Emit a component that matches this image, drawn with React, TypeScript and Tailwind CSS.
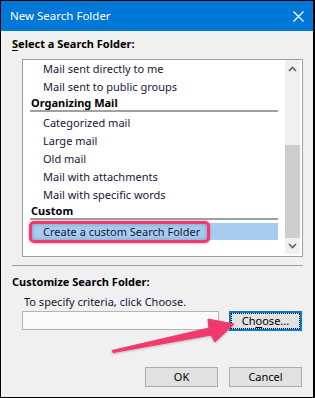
import React from 'react'

const font = { fontFamily: '"Noto Sans", "Open Sans", sans-serif' }

type Row = { label: string; header?: boolean; selected?: boolean }

const rows: Row[] = [
  { label: 'Mail sent directly to me' },
  { label: 'Mail sent to public groups' },
  { label: 'Organizing Mail', header: true },
  { label: 'Categorized mail' },
  { label: 'Large mail' },
  { label: 'Old mail' },
  { label: 'Mail with attachments' },
  { label: 'Mail with specific words' },
  { label: 'Custom', header: true },
  { label: 'Create a custom Search Folder', selected: true },
]

function Chevron({ up }: { up?: boolean }) {
  return (
    <svg width="9" height="6" viewBox="0 0 9 6">
      <polyline
        points={up ? '1,5 4.5,1.5 8,5' : '1,1 4.5,4.5 8,1'}
        fill="none"
        stroke="#606060"
        strokeWidth="1.6"
      />
    </svg>
  )
}

function ListRow({ row }: { row: Row }) {
  if (row.header) {
    return (
      <div className="h-[18px] flex flex-col">
        <div className="h-[14px] leading-[14px] pl-[1px] font-bold text-[11px] text-black">{row.label}</div>
        <div className="h-[2px] bg-[#a0a0a0]" />
      </div>
    )
  }
  if (row.selected) {
    return (
      <div className="relative h-[17px] mt-[1px] bg-[#a6cdef] pl-[13px] leading-[17px] text-[11px] text-[#161638]">
        <div className="absolute left-[-1px] top-[-2px] w-[181px] h-[22px] rounded-[5px] border-[3px] border-[#f2386d] shadow-[0_0_3px_rgba(242,56,109,0.6),inset_0_0_4px_rgba(60,90,130,0.45)]" />
        <span className="relative">{row.label}</span>
      </div>
    )
  }
  return <div className="h-[18px] leading-[18px] pl-[13px] text-[11px] text-[#161638]">{row.label}</div>
}

function Button({ children, focused }: { children: React.ReactNode; focused?: boolean }) {
  return (
    <div
      className={`w-[73px] h-[20px] flex items-center justify-center text-[11px] text-black bg-[#e1e1e1] ${
        focused ? 'border-2 border-[#0078d7]' : 'border border-[#adadad]'
      }`}
    >
      {focused ? (
        <div className="w-full h-full flex items-center justify-center border border-dotted border-black">
          {children}
        </div>
      ) : (
        children
      )}
    </div>
  )
}

export default function App() {
  return (
    <div
      style={font}
      className="relative w-[315px] h-[398px] flex flex-col bg-[#f0f0f0] border-t border-l border-r-2 border-b border-black overflow-hidden"
    >
      {/* Title bar */}
      <div className="h-[30px] shrink-0 flex items-center justify-between bg-[#0078d7] pl-[9px] pr-[9px]">
        <span className="text-[11.5px] text-white">New Search Folder</span>
        <svg width="11" height="11" viewBox="0 0 11 11">
          <path d="M0.5 0.5 L10.5 10.5 M10.5 0.5 L0.5 10.5" stroke="#fff" strokeWidth="1.2" />
        </svg>
      </div>

      {/* Select a Search Folder */}
      <div className="mt-[5px] ml-[11px] h-[16px] leading-[16px] font-bold text-[11px] text-black">
        <span className="underline underline-offset-2">S</span>elect a Search Folder:
      </div>

      <div className="mt-[7px] ml-[21px] w-[281px] h-[198px] flex bg-white border border-[#a0a0a0]">
        <div className="flex-1 flex flex-col px-[7px]">
          {rows.map((r) => (
            <ListRow key={r.label} row={r} />
          ))}
        </div>
        <div className="w-[15px] mr-[2px] mb-[2px] flex flex-col bg-[#f0f0f0]">
          <div className="h-[17px] flex items-center justify-center">
            <Chevron up />
          </div>
          <div className="h-[68px]" />
          <div className="h-[93px] bg-[#cdcdcd]" />
          <div className="flex-1 flex items-center justify-center">
            <Chevron />
          </div>
        </div>
      </div>

      {/* Divider */}
      <div className="mt-[8px] ml-[11px] w-[291px] h-[1px] bg-[#a0a0a0]" />

      {/* Customize */}
      <div className="mt-[8px] ml-[11px] h-[16px] leading-[16px] font-bold text-[11px] text-black">
        Customize Search Folder:
      </div>
      <div className="mt-[4px] ml-[23px] h-[16px] leading-[16px] text-[11px] text-[#161638]">
        To specify criteria, click Choose.
      </div>
      <div className="mt-[1px] ml-[21px] flex items-start gap-[10px]">
        <div className="w-[197px] h-[19px] bg-[#fafafa] border border-[#b4b4b4]" />
        <Button focused>
          <span>
            Ch<span className="underline underline-offset-2">o</span>ose...
          </span>
        </Button>
      </div>

      {/* Bottom buttons */}
      <div className="mt-[36px] ml-[144px] flex gap-[11px]">
        <Button>OK</Button>
        <Button>Cancel</Button>
      </div>

      {/* Annotation arrow */}
      <svg
        className="absolute left-0 top-0 pointer-events-none"
        width="315"
        height="398"
        viewBox="0 0 315 398"
        style={{ filter: 'drop-shadow(0 1px 1px rgba(0,0,0,0.25))' }}
      >
        <polygon
          points="111,349.5 208,327 207,318 233,323 214,341 210,334 112,351.5"
          fill="#f2386d"
          stroke="#f2386d"
          strokeWidth="1"
          strokeLinejoin="round"
        />
      </svg>
    </div>
  )
}
